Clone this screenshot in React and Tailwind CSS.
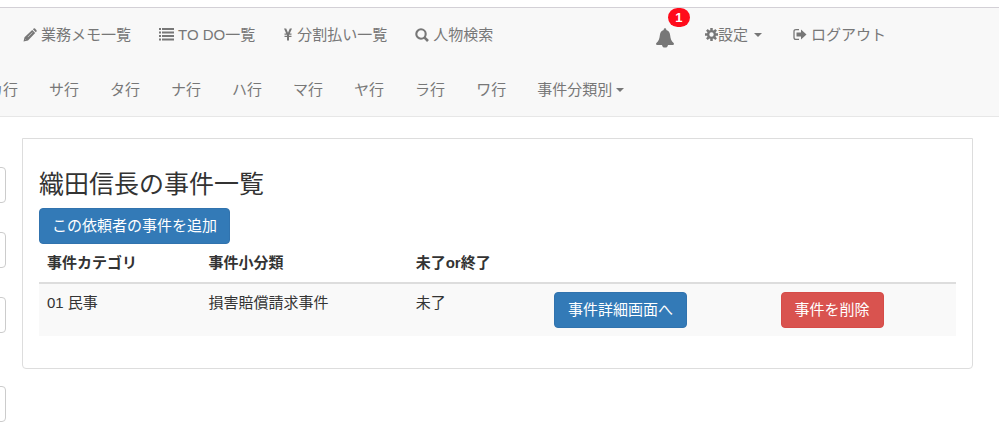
import React from "react";

function PencilIcon() {
  return (
    <svg viewBox="0 0 14 14" className="h-3.5 w-3.5" fill="currentColor" aria-hidden="true">
      <path d="M9.900 1.300 10.700.6q.7-.5 1.300 0l1.500 1.600q.5.7 0 1.300l-.7.8z" />
      <path fillRule="evenodd" d="M9.200 1.900 12.200 5 5 12.500.5 13.500 1.500 9.200zM9.300 4.300 4.700 8.900l.3.3 4.600-4.600zM2.300 11.300 2 12.100l.8-.3z" />
    </svg>
  );
}

function ListIcon() {
  return (
    <svg viewBox="0 0 15 13" className="h-[13px] w-[15px]" fill="currentColor" aria-hidden="true">
      <path d="M0 0h2v2H0zM0 3.500h2v2H0zM0 7h2v2H0zM0 10.500h2v2H0zM3 0H15v2H3zM3 3.500H15v2H3zM3 7H15v2H3zM3 10.500H15v2H3z" />
    </svg>
  );
}

function YenIcon() {
  return (
    <svg viewBox="0 0 10 13" className="h-[13px] w-2.5" fill="currentColor" aria-hidden="true">
      <path d="M1 .5h2.200L5 4.700 6.800 .5H9L6.800 5.500H8.500v1.200H6V7.800h2.500V9H6v3.500H4V9H1.500V7.800H4V6.700H1.500V5.500h1.700z" />
    </svg>
  );
}

function SearchIcon() {
  return (
    <svg viewBox="0 0 14 14" className="h-3.5 w-3.5" fill="none" stroke="currentColor" aria-hidden="true">
      <circle cx="6" cy="6" r="4.700" strokeWidth="2.100" />
      <path d="M9.300 9.300 13 13" strokeWidth="2.600" />
    </svg>
  );
}

function BellIcon() {
  return (
    <svg viewBox="0 0 18 20" className="h-5 w-[18px]" fill="currentColor" aria-hidden="true">
      <path d="M9 .3c.8 0 1.300.6 1.300 1.400v.3c2.400.7 3.500 2.400 3.800 5 .4 3.800 1.200 6.200 3.500 8q.6.600.2 1.600-.2.300-.8.300H12c-.2 1.600-1.200 2.700-3 2.700s-2.800-1.100-3-2.700H1q-.6 0-.8-.3-.4-1 .2-1.600c2.300-1.800 3.100-4.200 3.500-8 .3-2.600 1.400-4.300 3.800-5v-.3C7.700.9 8.200.3 9 .3z" />
    </svg>
  );
}

function CogIcon() {
  return (
    <svg viewBox="0 0 13 13" className="h-[13px] w-[13px]" aria-hidden="true">
      <circle cx="6.500" cy="6.500" r="3.400" fill="none" stroke="currentColor" strokeWidth="2.400" />
      <path
        d="M6.500 0v2.500M6.500 10.500V13M0 6.500h2.500M10.500 6.500H13M1.900 1.900l1.700 1.700M9.400 9.400l1.700 1.700M1.900 11.100l1.700-1.700M9.400 3.600l1.700-1.700"
        stroke="currentColor"
        strokeWidth="2.500"
      />
    </svg>
  );
}

function LogOutIcon() {
  return (
    <svg viewBox="0 0 14 13" className="h-[13px] w-3.5" aria-hidden="true">
      <path d="M6 1.600H3Q1 1.600 1 3.500v6Q1 11.400 3 11.400H6" fill="none" stroke="currentColor" strokeWidth="1.300" />
      <path d="M3.500 4.500H8V1.500l5.500 5L8 11.500v-3H3.500z" fill="currentColor" />
    </svg>
  );
}

function Caret() {
  return (
    <svg viewBox="0 0 8 4" className="h-1 w-2" fill="currentColor" aria-hidden="true">
      <path d="M0 0h8L4 4z" />
    </svg>
  );
}

const menu = [
  { label: "業務メモ一覧", Icon: PencilIcon },
  { label: "TO DO一覧", Icon: ListIcon },
  { label: "分割払い一覧", Icon: YenIcon },
  { label: "人物検索", Icon: SearchIcon },
];

const kanaRows = ["カ行", "サ行", "タ行", "ナ行", "ハ行", "マ行", "ヤ行", "ラ行", "ワ行"];

function Navbar() {
  return (
    <header className="mt-[7px] mr-px overflow-hidden border-t border-b border-t-[#d3d0d6] border-b-[#e7e7e7] bg-[#f8f8f8] text-[#777]">
      <div className="flex h-[53px] items-center pr-[113px] pl-[23px]">
        <nav className="flex gap-7">
          {menu.map(({ label, Icon }) => (
            <a key={label} href="#" className="flex items-center gap-1 whitespace-nowrap">
              <Icon />
              {label}
            </a>
          ))}
        </nav>
        <div className="ml-auto flex items-center gap-[31px]">
          <button type="button" aria-label="通知" className="relative">
            <span className="block pt-1.5">
              <BellIcon />
            </span>
            <span className="absolute -top-3.5 left-3 h-[19px] w-[22px] rounded-full bg-[#ff0b1b] text-center text-[13px] leading-[19px] font-bold text-white">
              1
            </span>
          </button>
          <button type="button" className="flex items-center whitespace-nowrap">
            <CogIcon />
            <span className="mr-1.5">設定</span>
            <Caret />
          </button>
          <a href="#" className="flex items-center gap-1 whitespace-nowrap">
            <LogOutIcon />
            ログアウト
          </a>
        </div>
      </div>
      <nav className="-ml-3 flex h-[55px] items-center gap-[31px] pt-0.5 whitespace-nowrap">
        {kanaRows.map((row) => (
          <a key={row} href="#">
            {row}
          </a>
        ))}
        <button type="button" className="flex items-center gap-1">
          事件分類別
          <Caret />
        </button>
      </nav>
    </header>
  );
}

function SideInput({ label }) {
  return (
    <input
      type="text"
      aria-label={label}
      className="h-9 w-40 shrink-0 rounded border border-[#ccc] bg-white px-3"
    />
  );
}

function SideForm() {
  return (
    <form className="flex w-1.5 shrink-0 flex-col items-end gap-[29px] overflow-hidden pt-[50px]">
      <SideInput label="氏名" />
      <SideInput label="ふりがな" />
      <SideInput label="電話番号" />
      <div className="flex justify-end pt-6">
        <SideInput label="住所" />
      </div>
    </form>
  );
}

const buttonBase = "h-9 rounded border px-[13px] whitespace-nowrap text-white";

function CasePanel() {
  return (
    <main className="mt-[21px] mr-[27px] ml-4 min-w-0 flex-1 self-start rounded-b border border-[#ddd] px-4 pt-[27px] pb-8">
      <h1 className="text-[25px] leading-[36px]">織田信長の事件一覧</h1>
      <button type="button" className="mt-1.5 h-9 rounded border border-[#3173ae] bg-[#337ab7] px-3 whitespace-nowrap text-white">
        この依頼者の事件を追加
      </button>
      <table className="w-full table-fixed text-left whitespace-nowrap">
        <colgroup>
          <col className="w-[17.6%]" />
          <col className="w-[22.6%]" />
          <col className="w-[15.1%]" />
          <col className="w-[24.7%]" />
          <col />
        </colgroup>
        <thead>
          <tr className="border-b-2 border-[#ddd]">
            <th className="p-2 font-bold">事件カテゴリ</th>
            <th className="p-2 font-bold">事件小分類</th>
            <th className="p-2 font-bold">未了or終了</th>
            <td />
            <td />
          </tr>
        </thead>
        <tbody>
          <tr className="bg-[#f9f9f9] align-top">
            <td className="p-2">01 民事</td>
            <td className="p-2">損害賠償請求事件</td>
            <td className="p-2">未了</td>
            <td className="p-2">
              <button type="button" className={`${buttonBase} border-[#3173ae] bg-[#337ab7]`}>
                事件詳細画面へ
              </button>
            </td>
            <td className="p-2">
              <button type="button" className={`${buttonBase} border-[#d64c48] bg-[#d9534f]`}>
                事件を削除
              </button>
            </td>
          </tr>
        </tbody>
      </table>
    </main>
  );
}

export default function App() {
  return (
    <div className="flow-root bg-white font-['Liberation_Sans','Noto_Sans_CJK_JP',sans-serif] text-[15px] leading-[22px] text-[#333]">
      <Navbar />
      <div className="flex">
        <SideForm />
        <CasePanel />
      </div>
    </div>
  );
}
